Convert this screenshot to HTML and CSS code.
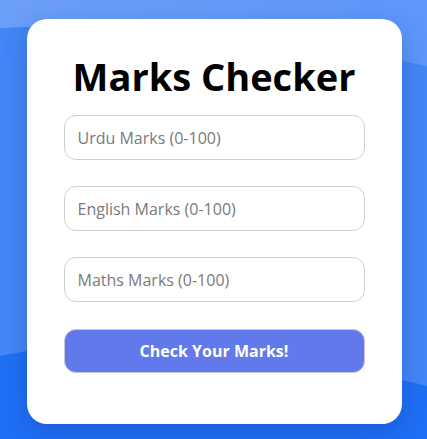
FILE: index.html
```html
<!DOCTYPE html>
<html lang="en">
<head>
<meta charset="utf-8">
<title>Marks Checker</title>
<link rel="stylesheet" href="styles.css">
</head>
<body>
<main class="page">
  <form class="card" onsubmit="return false">
    <h1 class="title">Marks Checker</h1>
    <input class="field" type="number" placeholder="Urdu Marks (0-100)">
    <input class="field" type="number" placeholder="English Marks (0-100)">
    <input class="field" type="number" placeholder="Maths Marks (0-100)">
    <button class="btn" type="submit">Check Your Marks!</button>
  </form>
</main>
</body>
</html>
```
FILE: styles.css
```css
html, body {
  margin: 0;
  padding: 0;
}
body {
  font-family: "Open Sans", "Noto Sans", sans-serif;
  background-color: #4386f6;
  background-image: url("data:image/svg+xml,%3Csvg xmlns='http://www.w3.org/2000/svg' viewBox='0 0 427 439' preserveAspectRatio='none'%3E%3Cdefs%3E%3ClinearGradient id='t' x1='0' x2='1'%3E%3Cstop offset='0' stop-color='%236c9ff9'/%3E%3Cstop offset='1' stop-color='%235e96fa'/%3E%3C/linearGradient%3E%3C/defs%3E%3Crect width='427' height='439' fill='%234386f6'/%3E%3Cpath d='M0 0H427V66Q300 40 180 32T0 28Z' fill='url(%23t)'/%3E%3Cpath d='M0 356Q120 330 250 352T427 386V439H0Z' fill='%231f6ff5'/%3E%3C/svg%3E");
  background-size: 100% 100%;
  background-repeat: no-repeat;
}
.page {
  min-height: 100vh;
  display: flex;
  align-items: center;
  justify-content: center;
  box-sizing: border-box;
  padding-left: 1px;
  padding-top: 4px;
}
.card {
  width: 375px;
  height: 405px;
  box-sizing: border-box;
  background: #fff;
  border-radius: 20px;
  box-shadow: 0 8px 24px rgba(10, 40, 120, 0.25);
  padding: 34px 37px 0;
  display: flex;
  flex-direction: column;
}
.title {
  margin: 0 0 16px;
  text-align: center;
  font-size: 38px;
  line-height: 46px;
  font-weight: 700;
  color: #000;
}
.field {
  height: 45px;
  box-sizing: border-box;
  border: 1px solid #cfcfcf;
  border-radius: 12px;
  padding: 0 13px;
  font-family: inherit;
  font-size: 16px;
  color: #333;
  background: #fff;
  margin: 0 0 26px;
  outline: none;
  -moz-appearance: textfield;
}
.field::-webkit-outer-spin-button,
.field::-webkit-inner-spin-button {
  -webkit-appearance: none;
  margin: 0;
}
.field::placeholder {
  color: #7a7a7a;
}
.btn {
  height: 44px;
  margin-top: 1px;
  border: 1px solid #c8c8d8;
  border-radius: 12px;
  background: #6279ec;
  color: #fff;
  font-family: inherit;
  font-size: 16px;
  font-weight: 700;
  cursor: pointer;
}
```
